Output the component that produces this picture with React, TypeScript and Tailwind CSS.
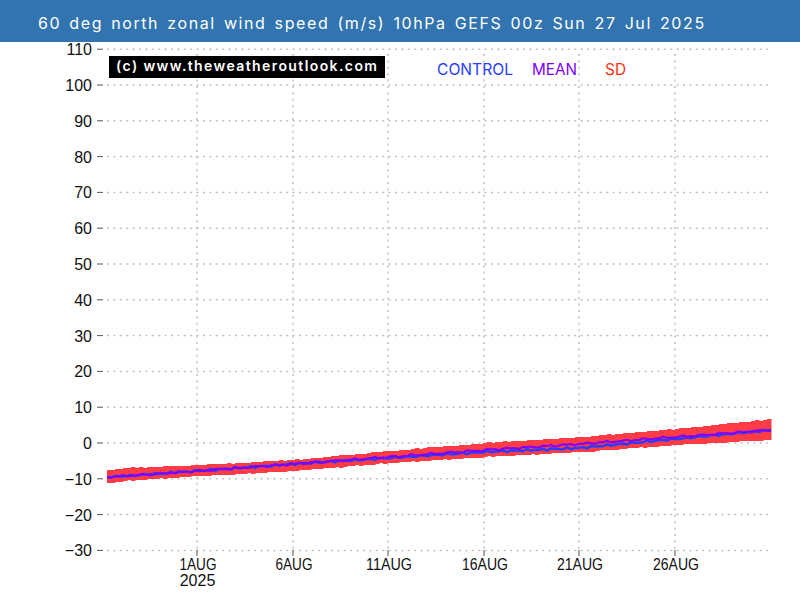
const yTicks = [110, 100, 90, 80, 70, 60, 50, 40, 30, 20, 10, 0, -10, -20, -30];
const xTicks = [
  { x: 197, label: "1AUG", width: 37 },
  { x: 293, label: "6AUG", width: 37 },
  { x: 388, label: "11AUG", width: 46 },
  { x: 484, label: "16AUG", width: 46 },
  { x: 579, label: "21AUG", width: 46 },
  { x: 675, label: "26AUG", width: 46 },
];

const valueToY = (v: number) => 443 - v * 3.58;

// [x, top of band, bottom of band, mean, control]
const knots = [
  [107, 470, 483, 477, 477],
  [125, 468, 481, 476, 476],
  [197, 465, 476, 471, 471],
  [293, 460, 471, 464, 464],
  [388, 451, 463, 457, 458],
  [484, 443, 457, 450, 452],
  [579, 437, 452, 444, 448],
  [675, 429, 445, 437, 439],
  [771, 419, 440, 430, 430],
];

function lerp(x: number, col: number) {
  for (let i = 0; i < knots.length - 1; i++) {
    const a = knots[i];
    const b = knots[i + 1];
    if (x <= b[0]) return a[col] + ((b[col] - a[col]) * (x - a[0])) / (b[0] - a[0]);
  }
  return knots[knots.length - 1][col];
}

// small repeatable wobble so the lines are not dead straight
const wobble = (i: number, a: number, b: number) => Math.sin(i * a) * 0.7 + Math.sin(i * b) * 0.6;

const bandRects: { x: number; top: number; bottom: number }[] = [];
for (let x = 107, i = 0; x < 771; x += 4, i++) {
  bandRects.push({
    x,
    top: Math.round(lerp(x, 1) + wobble(i, 1.7, 2.9) * 0.35),
    bottom: Math.round(lerp(x, 2) + wobble(i, 2.3, 0.9) * 0.35),
  });
}

const linePoints = (col: number, a: number, b: number) => {
  const pts: string[] = [];
  for (let x = 107, i = 0; x <= 771; x += 4, i++) {
    pts.push(`${x},${(lerp(x, col) + wobble(i, a, b)).toFixed(1)}`);
  }
  return pts.join(" ");
};

function Chart() {
  return (
    <svg width={800} height={558} viewBox="0 42 800 558" className="block font-['Liberation_Sans',Arial,sans-serif]">
      {/* grid */}
      {yTicks.map((v) => (
        <g key={v}>
          <line x1={107} x2={771} y1={valueToY(v)} y2={valueToY(v)} stroke="#c0c0c0" strokeWidth={1.5} strokeDasharray="2 4.4" />
          <line x1={97} x2={103} y1={valueToY(v)} y2={valueToY(v)} stroke="#555" strokeWidth={1} />
          <text x={92} y={valueToY(v) + 6} textAnchor="end" fontSize={16} fill="#111">
            {v < 0 ? `\u2212${-v}` : v}
          </text>
        </g>
      ))}
      {xTicks.map((t) => (
        <g key={t.x}>
          <line x1={t.x} x2={t.x} y1={54} y2={549} stroke="#c0c0c0" strokeWidth={1.5} strokeDasharray="2 4.4" />
          <line x1={t.x} x2={t.x} y1={550} y2={556} stroke="#555" strokeWidth={1} />
          <text x={t.x + 1} y={570} textAnchor="middle" fontSize={16} fill="#111" textLength={t.width} lengthAdjust="spacingAndGlyphs">
            {t.label}
          </text>
        </g>
      ))}
      <text x={197.5} y={586} textAnchor="middle" fontSize={16} fill="#111">
        2025
      </text>

      {/* SD band */}
      {bandRects.map((r) => (
        <rect key={r.x} x={r.x} y={r.top} width={4.5} height={r.bottom - r.top} fill="#ff3b45" />
      ))}
      <polyline points={linePoints(4, 1.9, 3.1)} fill="none" stroke="#2a3cff" strokeWidth={2.5} />
      <polyline points={linePoints(3, 1.3, 2.7)} fill="none" stroke="#8000ff" strokeWidth={2} />

      {/* legend */}
      <g fontSize={16} className="font-['Inter',sans-serif]">
        <text x={437} y={75} fill="#2a3cff" textLength={76} lengthAdjust="spacingAndGlyphs">CONTROL</text>
        <text x={532} y={75} fill="#8000ff" textLength={45} lengthAdjust="spacingAndGlyphs">MEAN</text>
        <text x={605} y={75} fill="#ff3010" textLength={21} lengthAdjust="spacingAndGlyphs">SD</text>
      </g>
    </svg>
  );
}

export default function App() {
  return (
    <div className="relative w-[800px] h-[600px] bg-white overflow-hidden">
      <div className="h-[42px] bg-[#3174b0] flex items-center pl-[38px] pt-[3px] text-white font-['Inter',sans-serif] text-[16px] font-normal tracking-[1.6px] [word-spacing:2px] whitespace-nowrap">
        60 deg north zonal wind speed (m/s) 10hPa GEFS 00z Sun 27 Jul 2025
      </div>
      <Chart />
      <div className="absolute left-[109px] top-[56px] w-[276px] h-[22px] bg-black flex items-center pl-[7px] pb-[3px] text-white font-['Inter',sans-serif] text-[14px] font-semibold tracking-[1.4px] whitespace-nowrap">
        (c) www.theweatheroutlook.com
      </div>
    </div>
  );
}
